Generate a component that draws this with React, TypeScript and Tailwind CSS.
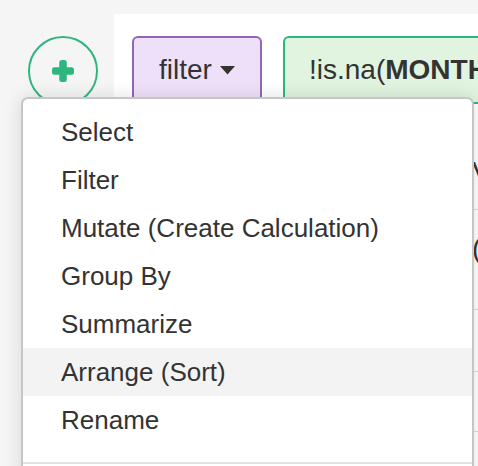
import React from "react";

const items = [
  "Select",
  "Filter",
  "Mutate (Create Calculation)",
  "Group By",
  "Summarize",
  "Arrange (Sort)",
  "Rename",
];

export default function App() {
  return (
    <div
      className="relative w-[478px] h-[466px] overflow-hidden bg-[#f5f5f5] flex text-[#333]"
      style={{ fontFamily: '"Liberation Sans", Arial, sans-serif' }}
    >
      <div className="w-[114px] shrink-0 pt-[36px] pl-[28px]">
        <div className="w-[70px] h-[70px] rounded-full border-2 border-[#2fb67f] flex items-center justify-center">
          <svg width="24" height="24" viewBox="0 0 24 24">
            <rect x="8.25" y="1" width="7.5" height="22" rx="2.5" fill="#2fb67f" />
            <rect x="1" y="8.25" width="22" height="7.5" rx="2.5" fill="#2fb67f" />
          </svg>
        </div>
      </div>
      <div className="mt-[14px] flex-1 bg-white flex flex-col min-w-0">
        <div className="flex gap-[21px] pt-[22px] pl-[18px]">
          <div className="h-[68px] w-[130px] shrink-0 rounded-[6px] border-2 border-[#9266b1] bg-[#eee0f8] flex items-center justify-center gap-[8px] text-[28px]">
            <span>filter</span>
            <svg width="15" height="9" viewBox="0 0 15 9">
              <path d="M0 0 L15 0 L7.5 8.5 Z" fill="#333" />
            </svg>
          </div>
          <div className="h-[68px] flex-1 min-w-[220px] rounded-l-[6px] border-2 border-r-0 border-[#2fb67f] bg-[#e0f4e0] flex items-center pl-[24px] text-[28px] whitespace-nowrap">
            <span>!is.na(</span>
            <span className="font-bold">MONTH</span>
          </div>
        </div>
        <div className="flex flex-col pl-[300px] text-[28px] whitespace-nowrap">
          <div className="h-[106px] border-b border-[#dcdcdc] flex items-center pl-[58px] pt-[30px]">VALUE</div>
          <div className="h-[100px] border-b border-[#dcdcdc] flex items-start pl-[58px] pt-[18px]">(</div>
          <div className="h-[62px] border-b border-[#dcdcdc]"></div>
          <div className="h-[60px] border-b border-[#dcdcdc]"></div>
        </div>
      </div>

      <div className="absolute left-[21px] top-[97px] w-[453px] h-[400px] bg-white border-2 border-[#c6c6c6] rounded-t-[7px] shadow-[0_0_18px_rgba(0,0,0,0.12)] pt-[9px]">
        {items.map((it) => (
          <div
            key={it}
            className={`h-[48px] flex items-center pl-[38px] text-[26px] ${
              it === "Arrange (Sort)" ? "bg-[#f3f3f3]" : ""
            }`}
          >
            {it}
          </div>
        ))}
        <div className="mt-[18px] h-[2px] bg-[#e2e2e2]" />
      </div>
    </div>
  );
}
